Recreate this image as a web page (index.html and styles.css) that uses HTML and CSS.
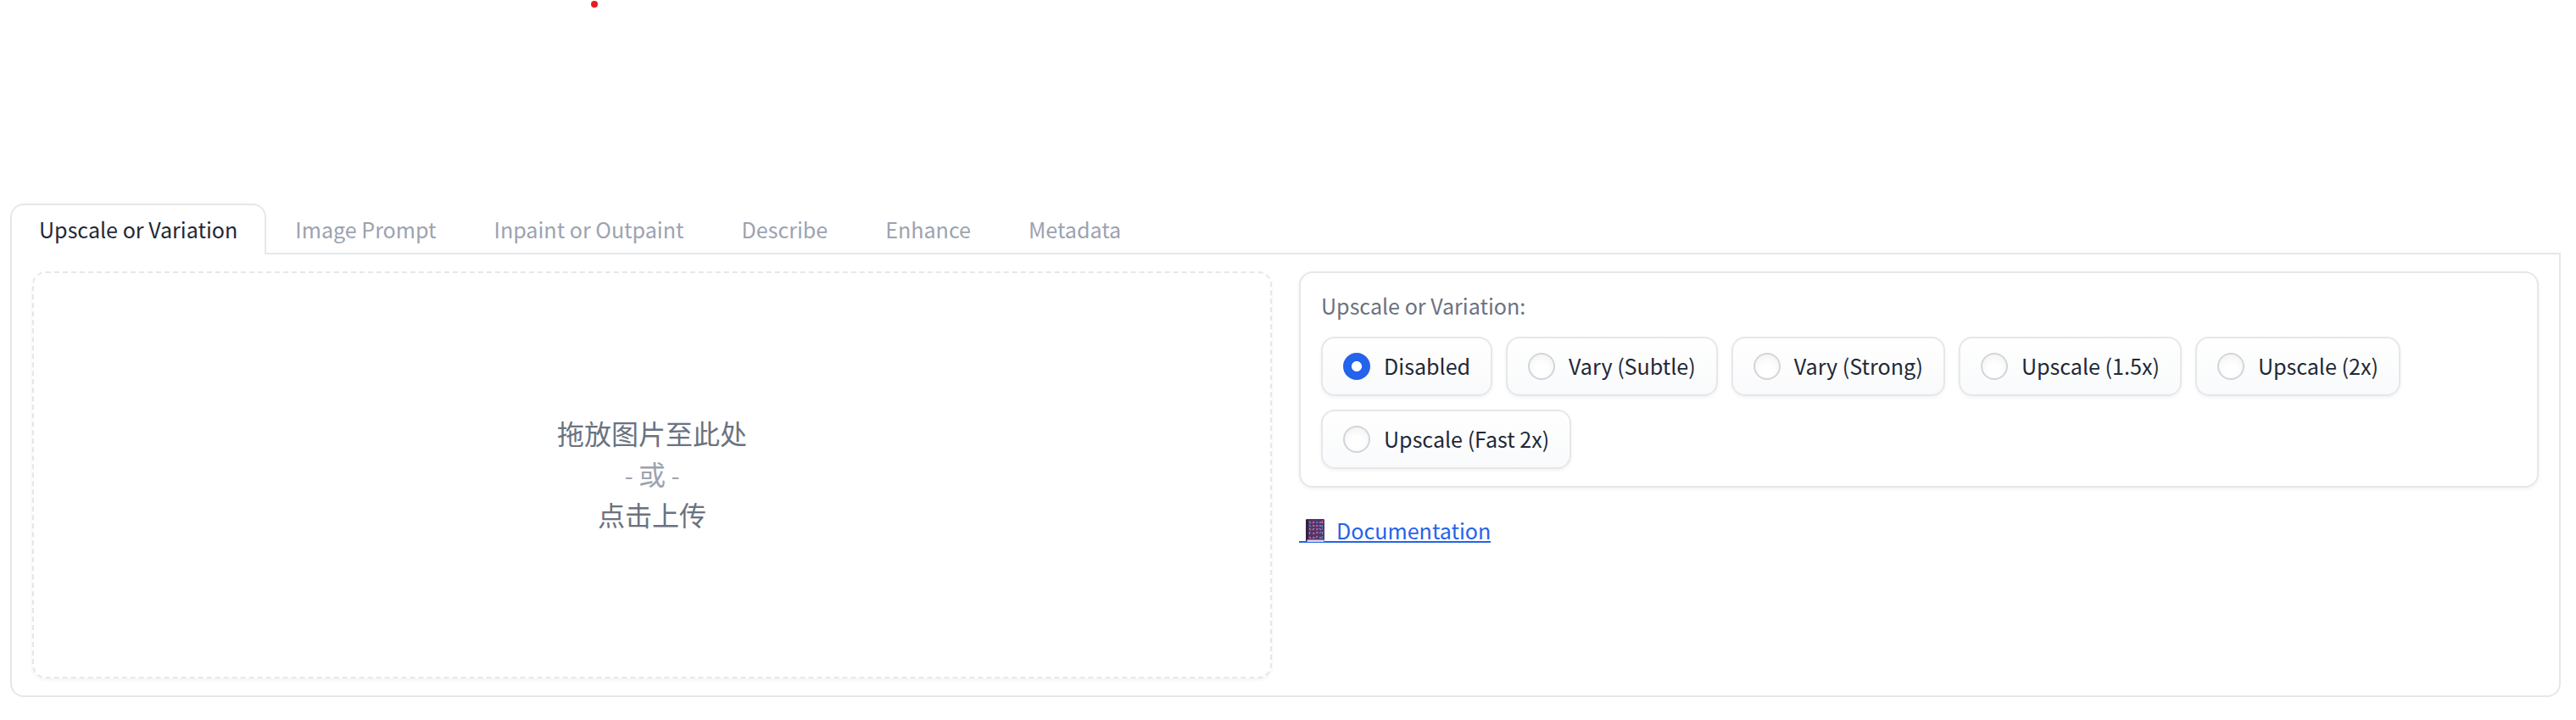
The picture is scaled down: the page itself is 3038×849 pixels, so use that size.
FILE: index.html
```html
<!DOCTYPE html>
<html lang="zh">
<head>
<meta charset="utf-8">
<title>Upscale or Variation</title>
<link rel="stylesheet" href="styles.css">
</head>
<body>
<span class="dot"></span>
<main class="tabs">
  <nav class="tab-nav">
    <button class="tab selected">Upscale or Variation</button>
    <button class="tab">Image Prompt</button>
    <button class="tab">Inpaint or Outpaint</button>
    <button class="tab">Describe</button>
    <button class="tab">Enhance</button>
    <button class="tab">Metadata</button>
  </nav>
  <section class="panel">
    <div class="dropzone">
      <span>拖放图片至此处</span>
      <span class="or"><small>- </small>或<small> -</small></span>
      <span>点击上传</span>
    </div>
    <div class="column">
      <div class="card">
        <div class="label">Upscale or Variation:</div>
        <div class="options">
          <label class="option"><i class="radio checked"></i><span>Disabled</span></label>
          <label class="option"><i class="radio"></i><span>Vary (Subtle)</span></label>
          <label class="option"><i class="radio"></i><span>Vary (Strong)</span></label>
          <label class="option"><i class="radio"></i><span>Upscale (1.5x)</span></label>
          <label class="option"><i class="radio"></i><span>Upscale (2x)</span></label>
          <label class="option"><i class="radio"></i><span>Upscale (Fast 2x)</span></label>
        </div>
      </div>
      <a class="doc">
        <svg class="book" width="22" height="27" viewBox="0 0 22 27">
          <rect width="22" height="27" rx="1.2" fill="#533566"/>
          <path d="M0 1h3v25H0z" fill="#34213f"/>
          <path d="M1.500 24.500h20v2.500h-20z" fill="#d9d5dc"/>
          <g fill="none" stroke-width="1.300">
            <path stroke="#998f9f" d="M4 3l2 2M16 4h2.500M8 8h2.500M16 8h2.500M4 11l2 2M12 12h2.500M4.500 15v3M12 16h2.500M19.500 15v3M8 22h2.500M16 22h2.500"/>
            <path stroke="#f05cc0" d="M8 5l2-2M19.500 2v3M12 8h2.500M8 13l2-2M16 11l2 2M8 17h2.500M4 21l2 2M12 22l2-2"/>
            <path stroke="#4b86e8" d="M12 4h2.500M4 7l2 2M19.500 7v3M19.500 11v2M16 17l2-2M19.500 20v3"/>
          </g>
        </svg>
        <span>Documentation</span>
      </a>
    </div>
  </section>
</main>
</body>
</html>
```
FILE: styles.css
```css
* { box-sizing: border-box; }
body {
  margin: 0;
  height: 849px;
  padding: 240px 18px 0 12px;
  background: #fff;
  color: #1f2937;
  font: 25.080px/40px "Noto Sans CJK SC", sans-serif;
  overflow: hidden;
}
.dot {
  position: absolute;
  left: 697px;
  top: 1px;
  width: 8px;
  height: 8px;
  border-radius: 50%;
  background: #e81b1f;
}
.tab-nav {
  display: flex;
  height: 60px;
  border-bottom: 2px solid #e5e7eb;
}
.tab {
  height: 60px;
  padding: 0 32px 2px;
  border: 2px solid transparent;
  border-bottom: 0;
  border-radius: 16px 16px 0 0;
  background: none;
  color: #9ca3af;
  font: inherit;
  white-space: nowrap;
}
.tab.selected {
  border-color: #e5e7eb;
  background: #fff;
  color: #1f2937;
}
.panel {
  display: grid;
  grid-template-columns: 1fr 1fr;
  gap: 32px;
  height: 522px;
  padding: 20px 24px;
  border: 2px solid #e5e7eb;
  border-top: 0;
  border-radius: 0 0 16px 16px;
}
.dropzone {
  display: flex;
  flex-direction: column;
  align-items: center;
  justify-content: center;
  height: 480px;
  padding-bottom: 4px;
  border: 2px dashed #e5e7eb;
  border-radius: 16px;
  box-shadow: 0 2px 4px rgba(0, 0, 0, .05);
  color: #6b7280;
  font-size: 32px;
  line-height: 48px;
}
.or { color: #9ca3af; height: 48px; }
.or small { font-size: 28.600px; }
.card {
  height: 255px;
  padding: 18px 24px;
  border: 2px solid #e5e7eb;
  border-radius: 16px;
  box-shadow: 0 2px 4px rgba(0, 0, 0, .05);
}
.label {
  height: 40px;
  margin-bottom: 17px;
  color: #6b7280;
}
.options {
  display: flex;
  flex-wrap: wrap;
  gap: 16px;
}
.option {
  display: flex;
  align-items: center;
  gap: 16px;
  height: 70px;
  padding: 0 24px;
  border: 2px solid #e5e7eb;
  border-radius: 16px;
  background: linear-gradient(to bottom, #fff, #f9fafb);
  box-shadow: 0 2px 4px rgba(0, 0, 0, .05);
  white-space: nowrap;
}
.option span { padding-bottom: 2px; }
.radio {
  width: 32px;
  height: 32px;
  border: 2px solid #d1d5db;
  border-radius: 50%;
  background: #fff;
  box-shadow: inset 0 4px 8px rgba(0, 0, 0, .05);
}
.radio.checked {
  border-color: #2563eb;
  background: radial-gradient(circle, #fff 5.700px, #2563eb 6.300px);
  box-shadow: none;
}
.doc {
  display: inline-flex;
  align-items: flex-start;
  height: 35px;
  margin-top: 30px;
  padding-left: 8px;
  border-bottom: 2px solid #2563eb;
  color: #2563eb;
  line-height: 40px;
}
.book {
  position: relative;
  margin: 7px 14px 0 0;
}
```
